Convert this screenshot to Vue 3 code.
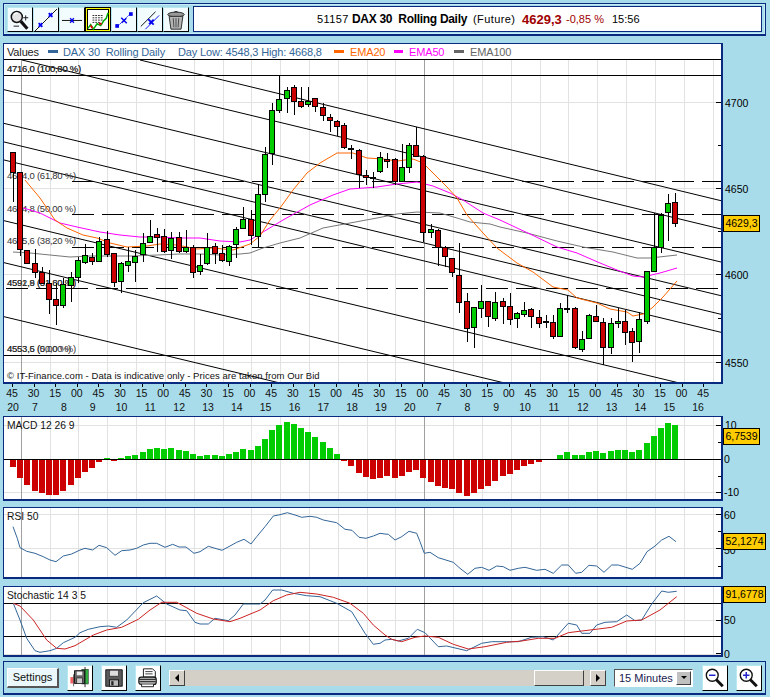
<script setup>
// chart data was sampled from a 3x view, so y values go through a base offset
const from3x = (bx, by, pts) => pts.map(([x, y]) => [bx + x / 3, by + y / 3])
const toPoints = (pts) => pts.map(([x, y]) => `${x.toFixed(1)},${y.toFixed(1)}`).join(' ')

const gridX = Array.from({ length: 25 }, (_, k) => Math.round(20.7 + 28.83 * k) + 0.5)
const dayX = [gridX[0], gridX[14]]

// [up?, bodyTop, bodyBottom, wickTop, wickBottom]
const rawA = [
  [0,127,187,127,275],[0,187,418,187,437],[0,421,460,421,460],[0,460,487,418,505],[0,487,520,470,520],
  [0,520,568,480,612],[0,568,586,520,645],[1,523,586,505,595],[1,500,526,485,575],[1,451,500,440,520],
  [1,436,456,403,462],[0,441,452,430,465],[1,392,452,380,452],[0,388,433,362,440],[0,430,517,430,530],
  [1,460,514,455,548],[1,454,464,412,485],[1,439,456,420,515],[1,400,433,368,455],[1,379,395,330,400],
  [0,373,380,355,425],[0,379,422,358,430],[1,385,421,365,448],[0,382,424,365,428],[1,412,424,360,430],
  [0,412,485,405,503],[1,464,484,433,495],[1,410,460,370,465],[0,407,428,400,462],[0,428,451,405,455],
  [1,407,454,405,467],[1,358,403,350,445],[1,328,355,290,358],[0,328,376,300,405],[1,253,378,222,410]
]
const rawB = [
  [1,253,372,232,395],[1,121,250,100,285],[1,88,120,16,128],[1,61,85,50,130],[0,52,94,45,135],
  [0,94,107,50,113],[1,93,103,50,110],[0,85,109,85,125],[0,112,136,100,152],[0,142,151,133,185],
  [0,154,168,150,198],[0,166,232,160,238],[0,234,238,225,268],[0,241,313,238,353],[0,316,321,300,345],
  [0,320,324,305,353],[1,262,304,247,310],[0,268,274,250,293],[0,268,334,265,345],[1,290,334,222,335],
  [1,226,292,220,308],[0,226,257,172,262],[0,257,487,255,515],[1,476,487,462,503],[0,479,531,478,587],
  [0,530,559,528,590],[0,565,605,563,620],[0,614,697,520,728],[0,694,775,670,815],[1,712,772,710,833],
  [1,693,715,645,745],[0,694,739,692,770],[1,697,745,665,752]
]
const rawC = [
  [0,574,587,565,642],[0,587,628,550,645],[1,610,625,605,654],[1,601,613,575,622],[0,598,619,595,654],
  [0,622,640,600,654],[0,634,637,615,655],[0,637,677,615,687],[1,595,677,578,677],[0,595,597,555,608],
  [0,595,710,590,716],[1,688,716,663,726],[1,616,685,612,685],[0,619,634,585,636],[0,637,710,625,765],
  [1,640,712,625,732],[1,634,640,595,655],[0,634,667,600,704],[0,664,697,655,755],[1,628,694,605,728],
  [1,484,634,482,642],[1,410,484,308,484],[1,314,412,308,428],[1,280,307,253,392],[0,277,340,248,350]
]
const candles = [
  ...rawA.map((c) => [c, 110]),
  ...rawB.map((c) => [c, 70]),
  ...rawC.map((c) => [c, 110])
].map(([c, base], i) => {
  const left = Math.round(13 + 7.2 * i - 3)
  const y = (v) => Math.round(base + v / 3)
  const top = y(c[1])
  return {
    i,
    x: left + 0.5,
    wx: left + 3,
    top: top + 0.5,
    h: Math.max(y(c[2]) - top, 1),
    wt: y(c[3]),
    wb: y(c[4]),
    fill: c[0] ? '#00cc00' : '#cc0000'
  }
})

// parallel channel lines, given by where they meet the right edge
const channels = [200.7, 229, 262, 295.7, 314.3, 332.3, 393, 435, 489].map((end) => ({
  y1: end - 718 * 0.24,
  y2: end
}))
channels[0].x1 = 140
channels[0].y1 = 60
channels[1].x1 = 22
channels[1].y1 = 60

const ema20 = toPoints([[25,180],[40,198],[55,220],[67,228],[83,235],[97,238],[110,243],[127,247],[147,246],[160,244],[177,245],[197,249],[213,248],[233,250],[250,244],[260,236],[270,220],[280,208],[293,190],[307,173],[320,163],[337,153],[353,153],[367,158],[383,159],[397,161],[413,159],[423,163],[433,173],[447,187],[457,198],[467,215],[483,233],[497,248],[517,263],[533,272],[553,287],[568,290],[577,298],[597,303],[610,309],[627,312],[633,316],[643,314],[652,308],[663,297],[677,281]])
const ema50 = toPoints([[20,207],[40,213],[60,223],[77,227],[100,232],[120,235],[140,237],[160,237],[180,238],[200,238],[220,241],[240,242],[250,240],[263,232],[283,220],[310,205],[333,195],[350,189],[377,187],[397,184],[417,182],[433,186],[450,193],[463,200],[483,213],[500,220],[517,228],[530,234],[557,247],[577,253],[600,263],[617,270],[633,276],[643,277],[660,273],[677,268]])
const ema100 = toPoints([[13,252],[30,253],[50,255],[70,257],[90,256],[113,256],[133,256],[157,255],[180,254],[200,254],[220,255],[240,254],[250,253],[263,248],[280,243],[300,238],[323,228],[350,223],[377,218],[397,214],[417,212],[440,213],[457,218],[470,222],[490,224],[500,227],[527,233],[557,241],[583,247],[613,252],[637,258],[650,258],[677,255]])

const fibLabels = [
  { y: 72, t: ['4716,0 (100,00 %)', '4716,0 (100,80 %)'] },
  { y: 179, t: ['4664,0 (61,80 %)'] },
  { y: 212, t: ['4634,8 (50,00 %)'] },
  { y: 244, t: ['4615,6 (38,20 %)'] },
  { y: 286, t: ['4592,9 (61,80 %)', '4591,8 (51,60 %)'] },
  { y: 352, t: ['4553,6 (0,00 %)', '4553,5 (50,00 %)'] }
]

const priceTicks = [
  { y: 102.5, label: '4700' },
  { y: 188.5, label: '4650' },
  { y: 274.5, label: '4600' },
  { y: 362.5, label: '4550' }
]
const priceMinor = [58.5, 145.5, 231.5, 318.5]

const timeRow = Array.from({ length: 33 }, (_, k) => ({
  x: 12 + 21.6 * k,
  t: ['45', '30', '15', '00'][k % 4]
}))
const dayRow = ['20', '7', '8', '9', '10', '11', '12', '13', '14', '15', '16', '17', '18', '19', '20', '7', '8', '9', '10', '11', '12', '13', '14', '15', '16']
  .map((t, k) => ({ t, x: k === 0 ? 13 : 35 + 28.83 * (k - 1) }))

// bar heights in 3x pixels from the zero line, index follows the candles
const macdVals = [-22,-55,-76,-92,-100,-106,-106,-94,-76,-55,-37,-25,-7,3,-4,3,9,12,21,30,33,30,33,27,24,15,9,12,12,9,15,21,30,27,39,60,88,102,111,105,93,81,66,51,33,15,-4,-19,-40,-52,-58,-55,-48,-55,-49,-37,-30,-55,-67,-79,-85,-87,-100,-109,-100,-88,-79,-64,-49,-42,-30,-19,-13,-6,0,0,12,21,12,12,21,24,18,24,27,27,21,27,48,69,93,108,102]
const macdBars = macdVals.map((v, i) => {
  const h = Math.round(Math.abs(v) / 3)
  return {
    i,
    x: Math.round(13 + 7.2 * i - 3),
    y: v > 0 ? 459 - h : 460,
    h,
    fill: v > 0 ? '#00cc00' : '#cc0000'
  }
}).filter((b) => b.h > 0)

const rsiLine = toPoints([
  ...from3x(0, 410, [[39,350],[52,385],[60,413],[80,424],[105,430],[130,440],[150,450],[168,455],[190,438],[215,432],[240,420],[255,415],[278,420],[297,406],[320,413],[345,436],[365,422],[390,420],[410,415],[430,405],[450,400],[470,400],[495,412],[518,403],[537,411],[558,411],[582,430],[600,425],[625,409],[645,415],[666,421],[690,408],[710,397],[732,388],[753,402],[770,380],[795,350],[820,318],[840,314],[862,308],[885,315],[905,322],[930,319],[950,322],[970,330],[1010,338],[1035,358],[1056,361],[1077,382],[1098,385],[1120,378],[1140,370]]),
  ...from3x(385, 410, [[0,372],[10,373],[30,390],[50,380],[72,364],[95,370],[105,395],[118,430],[135,427],[160,443],[205,457],[225,475],[248,493],[270,475],[290,472],[312,481],[335,468],[355,470],[375,481],[400,475],[420,472],[455,481],[480,478],[505,490],[530,465],[550,465],[572,490],[590,487],[612,466],[635,468],[657,487],[680,465],[700,465],[742,478],[765,460],[786,425],[810,408],[830,390],[852,379],[873,395]])
])
const stochBlue = toPoints([
  ...from3x(0, 580, [[40,70],[60,120],[80,175],[105,212],[120,217],[150,212],[170,205],[190,188],[225,172],[240,158],[265,148],[300,140],[325,138],[350,142],[380,120],[430,68],[470,48],[500,72],[540,90],[560,92],[585,127],[600,132],[625,132],[645,115],[685,122],[705,105],[730,72],[780,72],[795,60],[818,30],[845,30],[880,40],[920,47],[960,50],[1010,70],[1055,95],[1095,160],[1120,193],[1140,190]]),
  ...from3x(385, 580, [[0,180],[20,178],[40,183],[70,175],[97,148],[120,158],[160,200],[185,198],[245,212],[290,190],[320,185],[365,185],[400,185],[440,172],[475,170],[505,180],[550,130],[575,135],[590,160],[615,160],[635,135],[660,127],[695,125],[725,105],[750,122],[770,120],[800,72],[830,33],[850,37],[875,34]])
])
const stochRed = toPoints([
  ...from3x(0, 580, [[40,70],[60,78],[100,120],[140,180],[170,205],[195,207],[225,197],[280,165],[320,150],[365,142],[415,118],[450,90],[485,67],[530,67],[590,100],[640,117],[690,125],[720,115],[780,90],[820,62],[860,45],[900,37],[950,42],[1000,52],[1050,70],[1090,100],[1120,135]]),
  ...from3x(385, 580, [[0,165],[20,178],[50,185],[90,172],[120,168],[160,172],[205,193],[250,207],[300,200],[365,187],[410,183],[460,175],[510,175],[550,158],[590,153],[640,147],[680,142],[725,123],[770,120],[825,90],[875,50]])
])
</script>

<template>
  <div class="page">
    <div class="toolbar">
      <div class="tools">
        <button class="tool">
          <svg viewBox="0 0 24 24" class="ico">
            <circle cx="8.5" cy="8.7" r="6" fill="#e4e4e4" stroke="#111" stroke-width="1.6" />
            <path d="M5.5 6a4 4 0 0 1 4-1.5" fill="none" stroke="#fff" stroke-width="1.5" />
            <path d="M13 13.5l7 8" stroke="#111" stroke-width="3.4" />
            <path d="M15.5 9.5h5.5M18.2 7v5.5M5 18.7h6" stroke="#111" stroke-width="1" fill="none" />
          </svg>
        </button>
        <button class="tool">
          <svg viewBox="0 0 24 24" class="ico">
            <path d="M0 24L24 0" stroke="#000" stroke-width="1" />
            <path d="M4 19.5l4-4M4 15.5l4 4M15 8.5l4-4M15 4.5l4 4" stroke="#0000ee" stroke-width="2" />
          </svg>
        </button>
        <button class="tool">
          <svg viewBox="0 0 24 24" class="ico">
            <path d="M1 12.5h22" stroke="#000" stroke-width="1" />
            <path d="M10 10l4 5M14 10l-4 5" stroke="#0000ee" stroke-width="1.5" />
          </svg>
        </button>
        <button class="tool active">
          <svg viewBox="0 0 24 24" class="ico">
            <path d="M6 6h12M6 8.5h12M6 11h12M6 13.5h8" stroke="#222" stroke-width="1" stroke-dasharray="2 1" />
            <path d="M1 20l3-4 3 5 4-6 4 2 3-5 3-3 2-6" fill="none" stroke="#00aa00" stroke-width="1.6" />
            <path d="M4 17l2 3M13 15h3" stroke="#dd0000" stroke-width="2" />
          </svg>
        </button>
        <button class="tool">
          <svg viewBox="0 0 24 24" class="ico">
            <path d="M5 19L19 5" stroke="#0000ee" stroke-width="1" stroke-dasharray="2 1" />
            <rect x="2.5" y="16.5" width="4" height="4" fill="#0000ee" />
            <rect x="17.5" y="3.5" width="4" height="4" fill="#0000ee" />
            <path d="M9 9.5l6 6M9.5 15l5-5" stroke="#0000ee" stroke-width="1.6" />
          </svg>
        </button>
        <button class="tool">
          <svg viewBox="0 0 24 24" class="ico">
            <path d="M2 19L18 3" stroke="#000" stroke-width="1" />
            <path d="M7 22L22 7" stroke="#0000ee" stroke-width="1" />
            <path d="M10 11l6 6M11 16.5l5-5" stroke="#0000ee" stroke-width="2" />
          </svg>
        </button>
        <button class="tool">
          <svg viewBox="0 0 24 24" class="ico">
            <ellipse cx="12" cy="6" rx="9" ry="2.6" fill="#999" stroke="#222" />
            <path d="M10 3.5q2-2 4 0" fill="none" stroke="#222" />
            <path d="M4.5 8l2 14h11l2-14z" fill="#b5b5b5" stroke="#222" />
            <path d="M9 10l.7 10M12 10v10M15 10l-.7 10" stroke="#444" />
          </svg>
        </button>
      </div>
      <div class="title">
        <span class="t-id">51157</span>
        <span class="t-name">DAX 30&nbsp; Rolling Daily</span>
        <span class="t-kind">(Future)</span>
        <span class="t-price">4629,3</span>
        <span class="t-chg">-0,85 %</span>
        <span class="t-time">15:56</span>
      </div>
    </div>

    <div class="row row-main">
      <div class="frame">
        <div class="legend">
          <span class="l-values">Values</span>
          <i class="sw" style="background: #336699"></i>
          <span class="l-name">DAX 30&nbsp; Rolling Daily</span>
          <span class="l-range">Day Low: 4548,3 High: 4668,8</span>
          <i class="sw sw-o"></i>
          <span class="l-o">EMA20</span>
          <i class="sw sw-m"></i>
          <span class="l-m">EMA50</span>
          <i class="sw sw-g"></i>
          <span class="l-g">EMA100</span>
        </div>
        <svg class="plot" width="717" height="322" viewBox="4 60 717 322">
          <g class="grid">
            <line v-for="x in gridX" :key="x" :x1="x" :x2="x" y1="60" y2="382" />
            <line v-for="t in priceTicks" :key="t.y" x1="4" x2="721" :y1="t.y" :y2="t.y" />
          </g>
          <line v-for="x in dayX" :key="x" class="day" :x1="x" :x2="x" y1="60" y2="382" />
          <line class="blk" x1="4" x2="721" y1="75.5" y2="75.5" />
          <line class="blk" x1="4" x2="721" y1="355.5" y2="355.5" />
          <line class="dash" x1="72" x2="721" y1="181.5" y2="181.5" />
          <line class="dash" x1="72" x2="721" y1="214.5" y2="214.5" />
          <line class="dash" x1="72" x2="721" y1="247.5" y2="247.5" />
          <line class="dash" x1="6" x2="721" y1="288.5" y2="288.5" />
          <line
            v-for="(c, i) in channels"
            :key="i"
            class="chan"
            :x1="c.x1 || 4"
            :y1="c.y1"
            x2="721"
            :y2="c.y2"
          />
          <g class="fib">
            <g v-for="f in fibLabels" :key="f.y">
              <text v-for="t in f.t" :key="t" x="7" :y="f.y">{{ t }}</text>
            </g>
          </g>
          <polyline class="ema" stroke="#777777" :points="ema100" />
          <polyline class="ema" stroke="#ff00ff" :points="ema50" />
          <polyline class="ema" stroke="#ff6600" :points="ema20" />
          <g v-for="c in candles" :key="c.i" class="candle">
            <line :x1="c.wx" :x2="c.wx" :y1="c.wt" :y2="c.wb" />
            <rect :x="c.x" :y="c.top" width="5" :height="c.h" :fill="c.fill" />
          </g>
          <g class="ticks">
            <line v-for="t in priceTicks" :key="t.y" x1="716" x2="721" :y1="t.y" :y2="t.y" />
            <line v-for="y in priceMinor" :key="y" x1="718" x2="721" :y1="y" :y2="y" />
          </g>
          <text class="note" x="7" y="379">© IT-Finance.com - Data is indicative only - Prices are taken from Our Bid</text>
        </svg>
      </div>
      <div class="axis">
        <span v-for="t in priceTicks" :key="t.label" class="a-label" :style="{ top: t.y - 49 + 'px' }">{{ t.label }}</span>
        <span class="badge" style="top: 172px">4629,3</span>
      </div>
    </div>

    <svg class="timeaxis" width="720" height="30" viewBox="3 384 720 30">
      <line v-for="t in timeRow" :key="t.x" class="tk" :x1="Math.round(t.x) + 0.5" :x2="Math.round(t.x) + 0.5" y1="384" y2="387" />
      <text v-for="t in timeRow" :key="'t' + t.x" class="tl" :x="t.x" y="397">{{ t.t }}</text>
      <text v-for="d in dayRow" :key="'d' + d.x" class="tl" :x="d.x" y="411">{{ d.t }}</text>
    </svg>

    <div class="row row-macd">
      <div class="frame">
        <svg class="plot" width="717" height="82" viewBox="4 417 717 82">
          <g class="grid">
            <line v-for="x in gridX" :key="x" :x1="x" :x2="x" y1="417" y2="499" />
            <line x1="4" x2="721" y1="425.5" y2="425.5" />
            <line x1="4" x2="721" y1="492.5" y2="492.5" />
          </g>
          <line v-for="x in dayX" :key="x" class="day" :x1="x" :x2="x" y1="417" y2="499" />
          <rect v-for="b in macdBars" :key="b.i" :x="b.x" :y="b.y" width="6" :height="b.h" :fill="b.fill" />
          <line class="blk" x1="4" x2="721" y1="459.5" y2="459.5" />
          <g class="ticks">
            <line x1="716" x2="721" y1="425.5" y2="425.5" />
            <line x1="718" x2="721" y1="442.5" y2="442.5" />
            <line x1="718" x2="721" y1="476.5" y2="476.5" />
            <line x1="716" x2="721" y1="492.5" y2="492.5" />
          </g>
          <text class="cap" x="7" y="429">MACD 12 26 9</text>
        </svg>
      </div>
      <div class="axis">
        <span class="a-label" style="top: 3px">10</span>
        <span class="a-label" style="top: 37px; left: 1px">0</span>
        <span class="a-label" style="top: 70px; left: 1px">-10</span>
        <span class="badge" style="top: 12px">6,7539</span>
      </div>
    </div>

    <div class="row row-rsi">
      <div class="frame">
        <svg class="plot" width="717" height="69" viewBox="4 508 717 69">
          <g class="grid">
            <line v-for="x in gridX" :key="x" :x1="x" :x2="x" y1="508" y2="577" />
            <line x1="4" x2="721" y1="514.5" y2="514.5" />
            <line x1="4" x2="721" y1="548.5" y2="548.5" />
          </g>
          <line v-for="x in dayX" :key="x" class="day" :x1="x" :x2="x" y1="508" y2="577" />
          <polyline class="ind" stroke="#336699" :points="rsiLine" />
          <g class="ticks">
            <line x1="716" x2="721" y1="514.5" y2="514.5" />
            <line x1="718" x2="721" y1="531.5" y2="531.5" />
            <line x1="716" x2="721" y1="548.5" y2="548.5" />
            <line x1="718" x2="721" y1="566.5" y2="566.5" />
          </g>
          <text class="cap" x="7" y="520">RSI 50</text>
        </svg>
      </div>
      <div class="axis">
        <span class="a-label" style="top: 2px; left: 1px">60</span>
        <span class="a-label" style="top: 37px; left: 1px">50</span>
        <span class="badge badge-w" style="top: 26px">52,1274</span>
      </div>
    </div>

    <div class="row row-stoch">
      <div class="frame">
        <svg class="plot" width="717" height="68" viewBox="4 587 717 68">
          <g class="grid">
            <line v-for="x in gridX" :key="x" :x1="x" :x2="x" y1="587" y2="655" />
            <line x1="4" x2="721" y1="620.5" y2="620.5" />
            <line x1="4" x2="721" y1="654.5" y2="654.5" />
          </g>
          <line v-for="x in dayX" :key="x" class="day" :x1="x" :x2="x" y1="587" y2="655" />
          <line class="blk" x1="4" x2="721" y1="603.5" y2="603.5" />
          <line class="blk" x1="4" x2="721" y1="636.5" y2="636.5" />
          <polyline class="ind" stroke="#336699" :points="stochBlue" />
          <polyline class="ind" stroke="#cc2222" :points="stochRed" />
          <g class="ticks">
            <line x1="716" x2="721" y1="620.5" y2="620.5" />
            <line x1="716" x2="721" y1="653.5" y2="653.5" />
          </g>
          <text class="cap" x="7" y="599">Stochastic 14 3 5</text>
        </svg>
      </div>
      <div class="axis">
        <span class="a-label" style="top: 28px; left: 1px">50</span>
        <span class="a-label" style="top: 62px; left: 1px">0</span>
        <span class="badge badge-w" style="top: 0">91,6778</span>
      </div>
    </div>

    <div class="footer">
      <button class="settings">Settings</button>
      <button class="tool big">
        <svg viewBox="0 0 24 24" class="ico">
          <rect x="1.5" y="11" width="7" height="7" fill="#f06060" />
          <path d="M5 8v13" stroke="#555" />
          <rect x="14" y="2.5" width="7" height="16" fill="#30b040" stroke="#222" stroke-width=".6" />
          <path d="M17.5 0v22" stroke="#222" />
          <path d="M6 4h11v14H6z" fill="#666" stroke="#111" />
          <rect x="8.5" y="5" width="6" height="4" fill="#eee" />
          <rect x="8.5" y="12" width="6" height="6" fill="#ccc" stroke="#111" stroke-width=".6" />
        </svg>
      </button>
      <button class="tool big">
        <svg viewBox="0 0 24 24" class="ico">
          <path d="M3 3h18v18H3z" fill="#5a5a5a" stroke="#111" />
          <rect x="7" y="3.5" width="10" height="6.5" fill="#ddd" stroke="#222" stroke-width=".7" />
          <rect x="7" y="14" width="10" height="7" fill="#bbb" stroke="#111" />
          <rect x="9" y="15.5" width="2.5" height="4.5" fill="#222" />
        </svg>
      </button>
      <button class="tool big">
        <svg viewBox="0 0 24 24" class="ico">
          <path d="M7 11V2h10l3 3v6z" fill="#fff" stroke="#111" />
          <path d="M9 5h8M9 7.5h8" stroke="#333" />
          <rect x="2" y="11" width="19" height="8" rx="2.5" fill="#bbb" stroke="#111" stroke-width="1.2" />
          <path d="M2.5 13.5h18M2.5 16h18" stroke="#111" />
          <path d="M5 19v2.5h13V19" fill="#fff" stroke="#111" />
        </svg>
      </button>
      <div class="scroll">
        <button class="arrow"><i class="tri-l"></i></button>
        <div class="track"><span class="thumb"></span></div>
        <button class="arrow"><i class="tri-r"></i></button>
      </div>
      <div class="select">
        <span>15 Minutes</span>
        <button class="drop"><i class="tri-d"></i></button>
      </div>
      <button class="tool big zoom-a">
        <svg viewBox="0 0 24 24" class="ico">
          <circle cx="9" cy="9" r="6.5" fill="#fff" stroke="#111" stroke-width="1.5" />
          <path d="M5.5 9h7" stroke="#2222cc" stroke-width="1.6" />
          <path d="M13.5 14l7 7" stroke="#111" stroke-width="3.2" />
        </svg>
      </button>
      <button class="tool big zoom-b">
        <svg viewBox="0 0 24 24" class="ico">
          <circle cx="9" cy="9" r="6.5" fill="#fff" stroke="#111" stroke-width="1.5" />
          <path d="M5.5 9h7M9 5.5v7" stroke="#2222cc" stroke-width="1.6" />
          <path d="M13.5 14l7 7" stroke="#111" stroke-width="3.2" />
        </svg>
      </button>
    </div>
  </div>
</template>

<style scoped>
.page {
  width: 770px;
  height: 697px;
  box-sizing: border-box;
  padding: 3px 0 0 3px;
  background: #a8dcea;
  font-family: "Liberation Sans", Arial, sans-serif;
  font-size: 11px;
  overflow: hidden;
}
button {
  padding: 0;
  font-family: inherit;
}

.toolbar {
  width: 763px;
  height: 33px;
  box-sizing: border-box;
  display: flex;
  align-items: center;
  padding: 0 3px;
  border: 1px solid #0a2a80;
  border-width: 1px 1px 2px 1px;
  box-shadow: inset 0 0 0 1px #c6ecf4;
}
.tools {
  display: flex;
  gap: 0;
  width: 186px;
}
.tool {
  width: 26px;
  height: 25px;
  box-sizing: border-box;
  display: block;
  background: #f2fbfd;
  border: 1px solid #b8e8f0;
  border-right: 1px solid #000;
  border-bottom: 1px solid #000;
}
.tool.active {
  border: 2px solid #ffff00;
  outline: 1px solid #000;
  outline-offset: -1px;
  background: #fff;
  box-shadow: inset 0 0 0 1px #000;
}
.ico {
  display: block;
  width: 22px;
  height: 22px;
  margin: 1px auto 0;
}
.title {
  flex: 1;
  height: 26px;
  box-sizing: border-box;
  display: flex;
  align-items: center;
  background: #fff;
  border: 1px solid #0a2a80;
  padding-left: 123px;
}
.t-id {
  width: 35px;
  letter-spacing: 0.4px;
}
.t-name {
  width: 121px;
  font-weight: bold;
  font-size: 12px;
  letter-spacing: -0.3px;
  white-space: nowrap;
}
.t-kind {
  width: 49px;
  letter-spacing: 0.4px;
}
.t-price {
  width: 44px;
  font-weight: bold;
  font-size: 13px;
  color: #a00000;
}
.t-chg {
  width: 46px;
  color: #a00000;
}

.row {
  display: flex;
  align-items: flex-start;
}
.row-main {
  margin-top: 7px;
}
.row-macd {
  margin-top: 2px;
}
.row-rsi {
  margin-top: 6px;
}
.row-stoch {
  margin-top: 7px;
}
.frame {
  width: 720px;
  box-sizing: border-box;
  background: #fff;
  border: 1px solid #0a2a80;
  border-width: 1px 2px 2px 1px;
}
.plot {
  display: block;
}
.legend {
  height: 15px;
  display: flex;
  align-items: center;
  padding-left: 3px;
  border-bottom: 1px solid #000;
  white-space: nowrap;
  letter-spacing: -0.15px;
}
.sw {
  display: block;
  flex: none;
  width: 10px;
  height: 3px;
}
.sw-o {
  background: #ff6600;
  margin-left: 16px;
}
.sw-m {
  width: 9px;
  background: #ff00ff;
  margin-left: 6px;
}
.sw-g {
  background: #666;
  margin-left: 10px;
}
.l-values {
  width: 41px;
  color: #222;
}
.l-name {
  margin-left: 5px;
  width: 115px;
  color: #336699;
}
.l-range {
  color: #336699;
  width: 140px;
}
.l-o,
.l-m,
.l-g {
  margin-left: 6px;
}
.l-o {
  width: 38px;
  color: #ff6600;
}
.l-m {
  width: 35px;
  color: #ff00ff;
}
.l-g {
  color: #666;
}

.grid line {
  stroke: #e2e2e2;
  stroke-width: 1;
  shape-rendering: crispEdges;
}
.day {
  stroke: #a0a0a0;
  shape-rendering: crispEdges;
}
.blk {
  stroke: #000;
  shape-rendering: crispEdges;
}
.dash {
  stroke: #000;
  stroke-dasharray: 22 8;
  shape-rendering: crispEdges;
}
.chan {
  stroke: #000;
  stroke-width: 1;
}
.fib text {
  font-size: 9.5px;
  fill: #333;
  letter-spacing: -0.25px;
}
.ema,
.ind {
  fill: none;
  stroke-width: 1;
}
.candle line {
  stroke: #000;
  shape-rendering: crispEdges;
}
.candle rect {
  stroke: #000;
  shape-rendering: crispEdges;
}
.ticks line {
  stroke: #000;
  shape-rendering: crispEdges;
}
.note {
  font-size: 9.5px;
  letter-spacing: 0.05px;
  fill: #111;
}
.cap {
  font-size: 10.3px;
  fill: #111;
}

.axis {
  position: relative;
  width: 44px;
  align-self: stretch;
}
.a-label {
  position: absolute;
  left: 2px;
  line-height: 13px;
  font-size: 10.5px;
}
.badge {
  position: absolute;
  left: 0;
  width: 37px;
  height: 17px;
  box-sizing: border-box;
  line-height: 15px;
  text-align: center;
  background: #ffcc00;
  border: 1px solid #000;
  font-size: 10.5px;
}
.badge-w {
  width: 43px;
}

.timeaxis {
  display: block;
}
.tk {
  stroke: #000;
  shape-rendering: crispEdges;
}
.tl {
  font-size: 10.5px;
  fill: #111;
  text-anchor: middle;
}

.footer {
  margin-top: 4px;
  width: 763px;
  height: 34px;
  box-sizing: border-box;
  display: flex;
  align-items: center;
  padding: 0 0 0 3px;
  border: 1px solid #0a2a80;
  border-width: 1px 1px 2px 1px;
}
.settings {
  width: 52px;
  height: 20px;
  box-sizing: border-box;
  background: #eaf8fb;
  border: 1px solid #fff;
  border-right: 2px solid #555;
  border-bottom: 2px solid #555;
  font-size: 11px;
  color: #111;
}
.tool.big {
  width: 26px;
  height: 26px;
  margin-left: 8px;
  background: #fff;
}
.scroll {
  display: flex;
  align-items: center;
  margin-left: 8px;
  width: 437px;
  height: 16px;
  background: #d4d0c8;
}
.arrow {
  flex: none;
  width: 16px;
  height: 16px;
  display: flex;
  align-items: center;
  justify-content: center;
  box-sizing: border-box;
  background: #d4d0c8;
  border: 1px solid #fff;
  border-right: 1px solid #404040;
  border-bottom: 1px solid #404040;
}
.track {
  flex: 1;
  height: 16px;
  padding-left: 349px;
}
.thumb {
  display: block;
  width: 50px;
  height: 16px;
  box-sizing: border-box;
  background: #d4d0c8;
  border: 1px solid #fff;
  border-right: 1px solid #404040;
  border-bottom: 1px solid #404040;
}
.tri-l {
  width: 0;
  height: 0;
  border: 4px solid transparent;
  border-left-width: 0;
  border-right: 4px solid #000;
}
.tri-r {
  width: 0;
  height: 0;
  border: 4px solid transparent;
  border-right-width: 0;
  border-left: 4px solid #000;
}
.select {
  margin-left: 8px;
  width: 79px;
  height: 18px;
  box-sizing: border-box;
  display: flex;
  align-items: center;
  justify-content: space-between;
  padding-left: 4px;
  background: #fff;
  border: 1px solid #555;
  border-right-color: #fff;
  border-bottom-color: #fff;
  color: #1a1a50;
  font-size: 11px;
}
.drop {
  width: 15px;
  height: 14px;
  margin-right: 1px;
  display: flex;
  align-items: center;
  justify-content: center;
  background: #c0c0c0;
  border: 1px solid #fff;
  border-right-color: #404040;
  border-bottom-color: #404040;
}
.tri-d {
  width: 0;
  height: 0;
  border: 3px solid transparent;
  border-bottom-width: 0;
  border-top: 3px solid #000;
}
.tool.zoom-a {
  margin-left: 9px;
}
.tool.zoom-b {
  margin-left: 8px;
}
</style>

<style>
html, body {
  margin: 0;
  background: #a8dcea;
}
</style>
